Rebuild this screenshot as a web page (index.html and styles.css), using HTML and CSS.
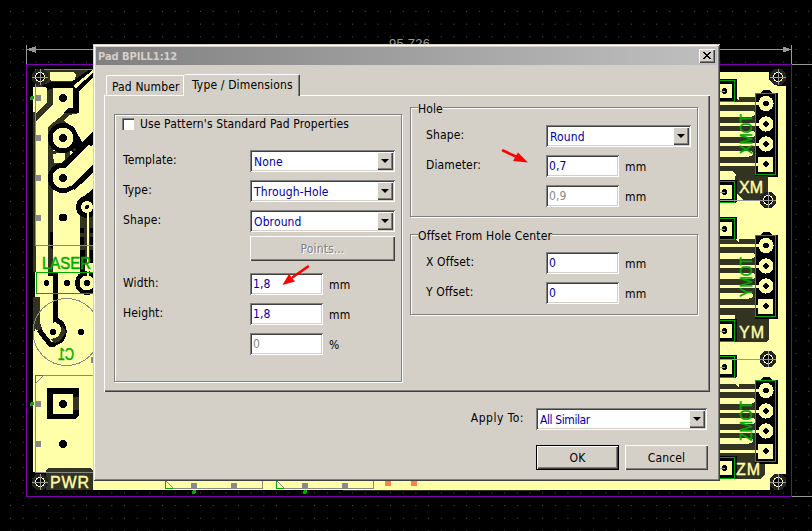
FILE: index.html
```html
<!DOCTYPE html>
<html lang="en">
<head>
<meta charset="utf-8">
<title>Pad BPILL1:12</title>
<link rel="stylesheet" href="styles.css">
</head>
<body>
<svg class="board" width="812" height="531" viewBox="0 0 812 531" shape-rendering="crispEdges">
  <defs>
    <pattern id="dots" x="10" y="11" width="12.67" height="12.67" patternUnits="userSpaceOnUse"><rect width="1" height="1" fill="#555"/></pattern>
    <g id="target"><circle r="8.5" fill="#242424"/><circle r="4.5" fill="#000" stroke="#ffffaa" stroke-width="1.3"/><path d="M-8 .5H8M.5 -8V8" stroke="#999"/></g>
    <g id="ring"><circle r="7.6" fill="#ffffaa"/><circle r="2.8"/></g>
    <g id="smallpad"><path d="M0-12H17V10L15 11H0z"/><path d="M0-7H12V7H0z" fill="#ffffaa"/><circle cx="4.5" r="2.7"/><path d="M0-10.5H14.5V10.5H0" fill="none" stroke="#00aa00"/><path d="M0 .5H5" stroke="#999"/></g>
    <g id="conn">
      <path d="M0 4H15L19 7V4H37V80H0z" fill="#333322"/>
      <path d="M0 20.500H32M0 41H32M0 60.500H29" stroke="#ffffaa" stroke-width="6"/>
      <circle cx="32" cy="20.500" r="3" fill="#ffffaa"/><circle cx="32" cy="41" r="3" fill="#ffffaa"/><circle cx="30" cy="60.500" r="3" fill="#ffffaa"/>
      <path d="M35 0H40L43-3H49L52 0H58V84H35z"/>
      <path d="M0 10.5H46M0 31H46M0 51H46M0 71H46" stroke="#ffffaa" stroke-width="3"/>
      <use href="#ring" x="46" y="10.5"/><use href="#ring" x="46" y="31"/><use href="#ring" x="46" y="51"/>
      <rect x="38" y="64" width="15" height="15" fill="#ffffaa"/><circle cx="46" cy="71" r="2.8"/>
      <rect x="35.5" y=".5" width="20" height="81" fill="none" stroke="#00aa00"/>
    </g>
  </defs>
  <rect width="812" height="531" fill="#000"/>
  <rect width="812" height="531" fill="url(#dots)"/>

  <g fill="none" stroke="#999">
    <path d="M26.5 45V64M791.5 45V64M27 49.5H791M792 64.5H812M792 496.5H812"/>
    <path d="M28 49.5L35 47V52zM790 49.5L783 47V52z" fill="#999"/>
  </g>
  <text class="dimension" x="389" y="48" textLength="41">95,726</text>
  <rect x="26.5" y="64.5" width="765" height="432" fill="none" stroke="#8000b0"/>

  <path d="M35 87V70H93V481H786V72H720V490H35z" fill="#ffffaa"/>
  <path d="M93 481H786V490H93z" fill="#ffffaa"/>
  <path d="M33 110H36V272H33zM33 297H40V322L44 334L35 329L33 331z" fill="#333322"/>
  <path d="M33 87H36V112H33zM33 331H36V472H33z" fill="#ffffaa"/>

  <path d="M35 70H90L80 78L72 84H47V87H35z" fill="#333322"/>
  <path d="M50 72H74L76 75L75 80L73 81H52L50 80z" fill="#ffffaa"/>
  <path d="M41 86L50 82H71L90 69.500H93V78L79 91V113H64L68 108H73V88H53V104L47 104V88z"/>
  <path d="M73 86L93 70V73L76 88z" fill="#ffffaa"/>
  <path d="M47 90V103L36 113V121L53 105V88z" fill="#333322"/>
  <path d="M65 113H79L69 115L64 121L69 124L48 146V127z" fill="#333322"/>
  <path d="M48 127H53V272H48z" fill="#333322"/>
  <path d="M53 151H70V168H53z" fill="#333322"/>
  <path d="M53 154L65 152V160L61 163H54z" fill="#ffffaa"/>
  <path d="M76 131L82 142L93 131V145L79 158L69 149z"/>
  <path d="M71 146L78 154" stroke="#333322" stroke-width="3"/>
  <circle cx="63" cy="138" r="15"/><circle cx="63" cy="178" r="15"/>
  <path d="M65 180L95 151" stroke="#000" stroke-width="28"/>
  <path d="M65 180L95 151" stroke="#ffffaa" stroke-width="17"/>
  <circle cx="63" cy="138" r="10.5" fill="#ffffaa"/><circle cx="63" cy="178" r="10.5" fill="#ffffaa"/>
  <path d="M79 200L93 189V220H81z"/><path d="M80 213H93V263H80z" fill="#333322"/>
  <path d="M80 228H84V233H80zM80 237H84V246H80zM90 228H93V233H90zM90 237H93V246H90z"/>
  <circle cx="87" cy="207" r="11"/><circle cx="87" cy="207" r="6" fill="#ffffaa"/>
  <path d="M87.5 207V272" stroke="#ffffaa" stroke-width="2"/>
  <circle cx="87" cy="207" r="2"/>
  <path d="M50 232H53V250L50 246zM80 250H85V272H80zM90 250H93V263H90z"/>
  <g><circle cx="63" cy="98" r="4"/><circle cx="63" cy="138" r="4"/><circle cx="63" cy="178" r="4"/><circle cx="63" cy="217.5" r="4"/></g>

  <circle cx="87" cy="283" r="12"/><circle cx="87" cy="283" r="7.5" fill="#ffffaa"/><path d="M87.5 262V283" stroke="#ffffaa" stroke-width="2"/>
  <circle cx="46.5" cy="283" r="3"/><circle cx="67" cy="283" r="3"/><circle cx="87" cy="283" r="3"/>
  <path d="M48 272H58V320L53 323V276H48z"/>
  <path d="M56 319L62 324Q67 332 61 340L54 344H50L39 330" fill="none" stroke="#000" stroke-width="5"/>
  <path d="M62 325L66 332L60 341L54 343L51 339L58 337L61 331z" fill="#333322"/>
  <circle cx="53" cy="332" r="3.3"/><circle cx="81" cy="332" r="3.3"/>

  <path d="M47 388H79V415L75 419H47z"/><path d="M53 394H73V414H53z" fill="#ffffaa"/><path d="M73 397H79V410H73z" fill="#333322"/>
  <circle cx="63" cy="404" r="4"/><circle cx="63" cy="444" r="4"/>
  <path d="M46 470L49 468H90L93 470V490H46zM33 473H46V490H33z" fill="#333322"/><path d="M27 473H46V490H27z"/>

  <g fill="none" stroke="#888"><path d="M93 69.5H35.5V245.5H93M93 375.5H35.5V472.5H93M36 383L43 376"/><circle cx="66.5" cy="332" r="33.5"/></g>
  <g fill="none" stroke="#00aa00"><path d="M35.5 76V69.5H43M93 272.5H36.5V293.5H93M35.5 383V375.5H43"/></g>
  <path d="M35 95h6v6h-6zM35 135h6v6h-6zM35 175h6v6h-6zM35 215h6v6h-6zM35 401h6v6h-6zM35 441h6v6h-6zM91 357h2v6h-2z" fill="#888"/>
  <circle cx="32" cy="98" r="2" fill="#00aa00"/><circle cx="32" cy="404" r="2" fill="#00aa00"/>
  <path d="M26.500 64V497" stroke="#8000b0"/>
  <use href="#target" x="40" y="77"/><use href="#target" x="40" y="482"/>
  <text class="silk" x="42" y="269" textLength="49" lengthAdjust="spacingAndGlyphs">LASER</text>
  <text class="silk" transform="translate(74 359.500) scale(-1 1)" textLength="16" lengthAdjust="spacingAndGlyphs">C1</text>
  <text class="copper" x="50" y="487.500" textLength="39">PWR</text>

  <use href="#conn" x="720" y="93"/><use href="#conn" x="720" y="235"/><use href="#conn" x="720" y="380"/>
  <path d="M735 170H755V176H768V200H743L735 192zM735 315H755V319H769V340L766 342H735zM735 460H755V464H765V474L760 479H735z" fill="#333322"/>
  <path d="M720 171H733L736 175L733 179H720z" fill="#ffffaa"/>
  <use href="#smallpad" x="720" y="91"/><use href="#smallpad" x="720" y="192"/><use href="#smallpad" x="720" y="229"/><use href="#smallpad" x="720" y="331"/><use href="#smallpad" x="720" y="367"/><use href="#smallpad" x="720" y="468"/>
  <text class="copper" x="739" y="192.500" textLength="24">XM</text><text class="copper" x="739" y="337.500" textLength="25">YM</text><text class="copper" x="736" y="474.500" textLength="24">ZM</text>
  <text class="silk" transform="translate(752 154) rotate(-90)" textLength="40" lengthAdjust="spacingAndGlyphs">XMOT</text>
  <text class="silk" transform="translate(752 297) rotate(-90)" textLength="40" lengthAdjust="spacingAndGlyphs">YMOT</text>
  <text class="silk" transform="translate(752 441) rotate(-90)" textLength="40" lengthAdjust="spacingAndGlyphs">ZMOT</text>
  <path d="M769 72H786V86H778L769 80zM770 490V479L778 474H786V490z"/>
  <use href="#target" x="778" y="77"/><use href="#target" x="768" y="200"/><use href="#target" x="768" y="359"/><use href="#target" x="778" y="482"/>
  <path d="M720 200.500H776M720 359.500H776" stroke="#999"/>

  <g fill="none" stroke="#888"><path d="M165.500 481V488.500H262.500V481M276.500 481V488.500H373.500V481M166 481L173 488M277 481L284 488"/></g>
  <path d="M165.500 481V488.500H173M276.500 481V488.500H284" fill="none" stroke="#00aa00"/>
  <path d="M191 483h6v5h-6zM231 483h6v5h-6zM302 483h6v5h-6zM342 483h6v5h-6z" fill="#888"/>
  <path d="M385 481h6v5h-6zM411 481h6v5h-6z" fill="#ff8040"/>
  <circle cx="194" cy="492" r="2" fill="#00aa00"/><circle cx="305" cy="492" r="2" fill="#00aa00"/>
  <path d="M343 490.500H540" stroke="#333322"/>
</svg>

<main class="dialog">
  <header class="titlebar"><span>Pad BPILL1:12</span>
    <button class="close" aria-label="Close"><svg width="8" height="7" viewBox="0 0 8 7" shape-rendering="crispEdges"><path d="M0 0h2v1h1v1h2V1h1V0h2v1H7v1H6v1H5v1h1v1h1v1h1v1H6V6H5V5H3v1H2v1H0V6h1V5h1V4h1V3H2V2H1V1H0z"/></svg></button>
  </header>
  <nav class="tabs"><span class="tab">Pad Number</span><span class="tab active">Type / Dimensions</span></nav>
  <section class="panel">
    <div class="group left">
      <label class="check"><i></i><span>Use Pattern's Standard Pad Properties</span></label>
      <div class="row"><label>Template:</label><div class="select">None<b></b></div></div>
      <div class="row"><label>Type:</label><div class="select">Through-Hole<b></b></div></div>
      <div class="row"><label>Shape:</label><div class="select">Obround<b></b></div></div>
      <div class="row points"><label></label><button class="btn disabled">Points...</button></div>
      <div class="row"><label>Width:</label><div class="input">1,8</div><em>mm</em></div>
      <div class="row"><label>Height:</label><div class="input">1,8</div><em>mm</em></div>
      <div class="row"><label></label><div class="input off">0</div><em>%</em></div>
    </div>
    <div class="column">
      <div class="group hole"><h2>Hole</h2>
        <div class="row"><label>Shape:</label><div class="select">Round<b></b></div></div>
        <div class="row"><label>Diameter:</label><div class="input">0,7</div><em>mm</em></div>
        <div class="row"><label></label><div class="input off">0,9</div><em>mm</em></div>
      </div>
      <div class="group offset"><h2>Offset From Hole Center</h2>
        <div class="row"><label>X Offset:</label><div class="input">0</div><em>mm</em></div>
        <div class="row"><label>Y Offset:</label><div class="input">0</div><em>mm</em></div>
      </div>
    </div>
  </section>
  <div class="apply"><label>Apply To:</label><div class="select">All Similar<b></b></div></div>
  <footer class="actions"><button class="btn default">OK</button><button class="btn">Cancel</button></footer>
</main>

<svg class="arrows" width="812" height="531" viewBox="0 0 812 531" fill="#ff0000" stroke="#ff0000">
  <path d="M308 266.500L293 277" stroke-width="2.600" stroke-linecap="round"/><path d="M282.500 285L289 274L295 281.500z" stroke="none"/>
  <path d="M503 150.500L517 157" stroke-width="2.600" stroke-linecap="round"/><path d="M528 162.500L513 161L518 152.500z" stroke="none"/>
</svg>
</body>
</html>
```
FILE: styles.css
```css
* { box-sizing: border-box; }
body {
  margin: 0;
  width: 812px;
  height: 531px;
  overflow: hidden;
  position: relative;
  background: #000;
  color: #000;
  font: 12px/14px "DejaVu Sans Condensed", "DejaVu Sans", sans-serif;
  font-stretch: condensed;
  letter-spacing: .13px;
}
.board { display: block; letter-spacing: 0; }
.silk, .copper { font: 16px "Liberation Sans", sans-serif; fill: #00aa00; stroke: #00aa00; stroke-width: .5px; }
.copper { fill: #ffffaa; stroke: #ffffaa; stroke-width: .4px; }
.dimension { font: 13px "Liberation Sans", sans-serif; fill: #999; }
.arrows { position: absolute; left: 0; top: 0; pointer-events: none; }

.dialog {
  position: absolute;
  left: 93px;
  top: 44px;
  width: 627px;
  height: 437px;
  padding: 3px;
  background: #d4d0c8;
  box-shadow: inset 1px 1px #d4d0c8, inset -1px -1px #404040, inset 2px 2px #fff, inset -2px -2px #808080;
}
.titlebar {
  display: flex;
  align-items: center;
  justify-content: space-between;
  height: 18px;
  padding: 0 2px;
  background: linear-gradient(90deg, #808080, #c0c0c0);
  color: #d4d0c8;
  font-weight: bold;
  font-size: 11px;
  letter-spacing: -.05px;
}
.titlebar span { padding-top: 1px; }
.close { display: flex; align-items: center; justify-content: center; width: 16px; height: 14px; padding: 0 1px 1px 0; }
.close, .btn, .select b {
  border: 0;
  background: #d4d0c8;
  box-shadow: inset 1px 1px #fff, inset -1px -1px #404040, inset -2px -2px #808080;
}

.tabs { display: flex; align-items: flex-end; height: 30px; margin-left: 10px; position: relative; }
.tab { width: 78px; height: 20px; padding: 4px 0 0 5px; border: 1px solid #fff; border-width: 1px 1px 0; border-radius: 2px 0 0; white-space: nowrap; }
.tab.active {
  width: 116px;
  height: 22px;
  padding: 3px 0 0 8px;
  border-right: 1px solid #404040;
  border-left: 0;
  border-radius: 2px 2px 0 0;
  background: #d4d0c8;
  box-shadow: inset -1px 0 #808080;
  margin-bottom: -1px;
  letter-spacing: .15px;
}
.panel {
  display: flex;
  gap: 8px;
  width: 606px;
  height: 297px;
  margin: 0 0 0 8px;
  padding: 12px 10px;
  box-shadow: inset 1px 1px #fff, inset -1px -1px #404040, inset -2px -2px #808080;
}
.group { position: relative; width: 288px; border: 1px solid #808080; box-shadow: 1px 1px #fff, inset 1px 1px #fff; }
.left { height: 268px; margin-top: 7px; padding: 3px 0 0 7px; }
.check { display: flex; align-items: flex-start; gap: 6px; height: 15px; margin-bottom: 17px; }
.check span { margin-top: -1px; }
.check i { width: 12px; height: 12px; background: #fff; box-shadow: inset 1px 1px #808080, inset 2px 2px #404040, inset -1px -1px #fff; }
.row { display: flex; height: 30px; }
.row label { width: 128px; padding: 3px 0 0 1px; }
.row em { margin: 5px 0 0 6px; font-style: normal; }
.points { height: 33px; padding-top: 0; }
.points .btn { margin-top: -4px; }
.select, .input {
  position: relative;
  height: 22px;
  padding: 4px 0 0 4px;
  background: #fff;
  color: #0000a8;
  box-shadow: inset 1px 1px #808080, inset -1px -1px #fff, inset 2px 2px #404040, inset -2px -2px #d4d0c8;
}
.select { width: 145px; padding-top: 5px; }
.input { width: 73px; padding-left: 3px; }
.off { color: #888; }
.select b { position: absolute; top: 2px; right: 2px; width: 16px; height: 18px; }
.select b::after { content: ""; position: absolute; left: 4px; top: 7px; border: 4px solid transparent; border-top-color: #000; border-bottom: 0; }
.btn { width: 83px; height: 25px; padding: 0; font: inherit; letter-spacing: inherit; color: #000; text-align: center; }
.btn.disabled { width: 145px; color: #808080; text-shadow: 1px 1px #fff; }
.btn.default { border: 1px solid #000; }

.column { display: flex; flex-direction: column; gap: 17px; }
.column h2 { position: relative; width: max-content; height: 14px; margin: -6px 0 0 7px; background: #d4d0c8; font: inherit; }
.offset h2 { letter-spacing: .17px; }
.column .row label { width: 120px; padding: 3px 0 0; }
.column .row { padding-left: 15px; }
.hole { height: 110px; }
.hole .row:nth-of-type(1) { margin-top: 9px; }
.offset { height: 81px; }
.offset .row:nth-of-type(1) { margin-top: 9px; }
.apply { display: flex; justify-content: flex-end; gap: 12px; margin: 16px 10px 0 0; letter-spacing: -.4px; }
.apply label { padding-top: 3px; letter-spacing: .5px; }
.apply .select { width: 171px; }
.actions { display: flex; justify-content: flex-end; gap: 6px; margin: 15px 9px 0 0; }
```
